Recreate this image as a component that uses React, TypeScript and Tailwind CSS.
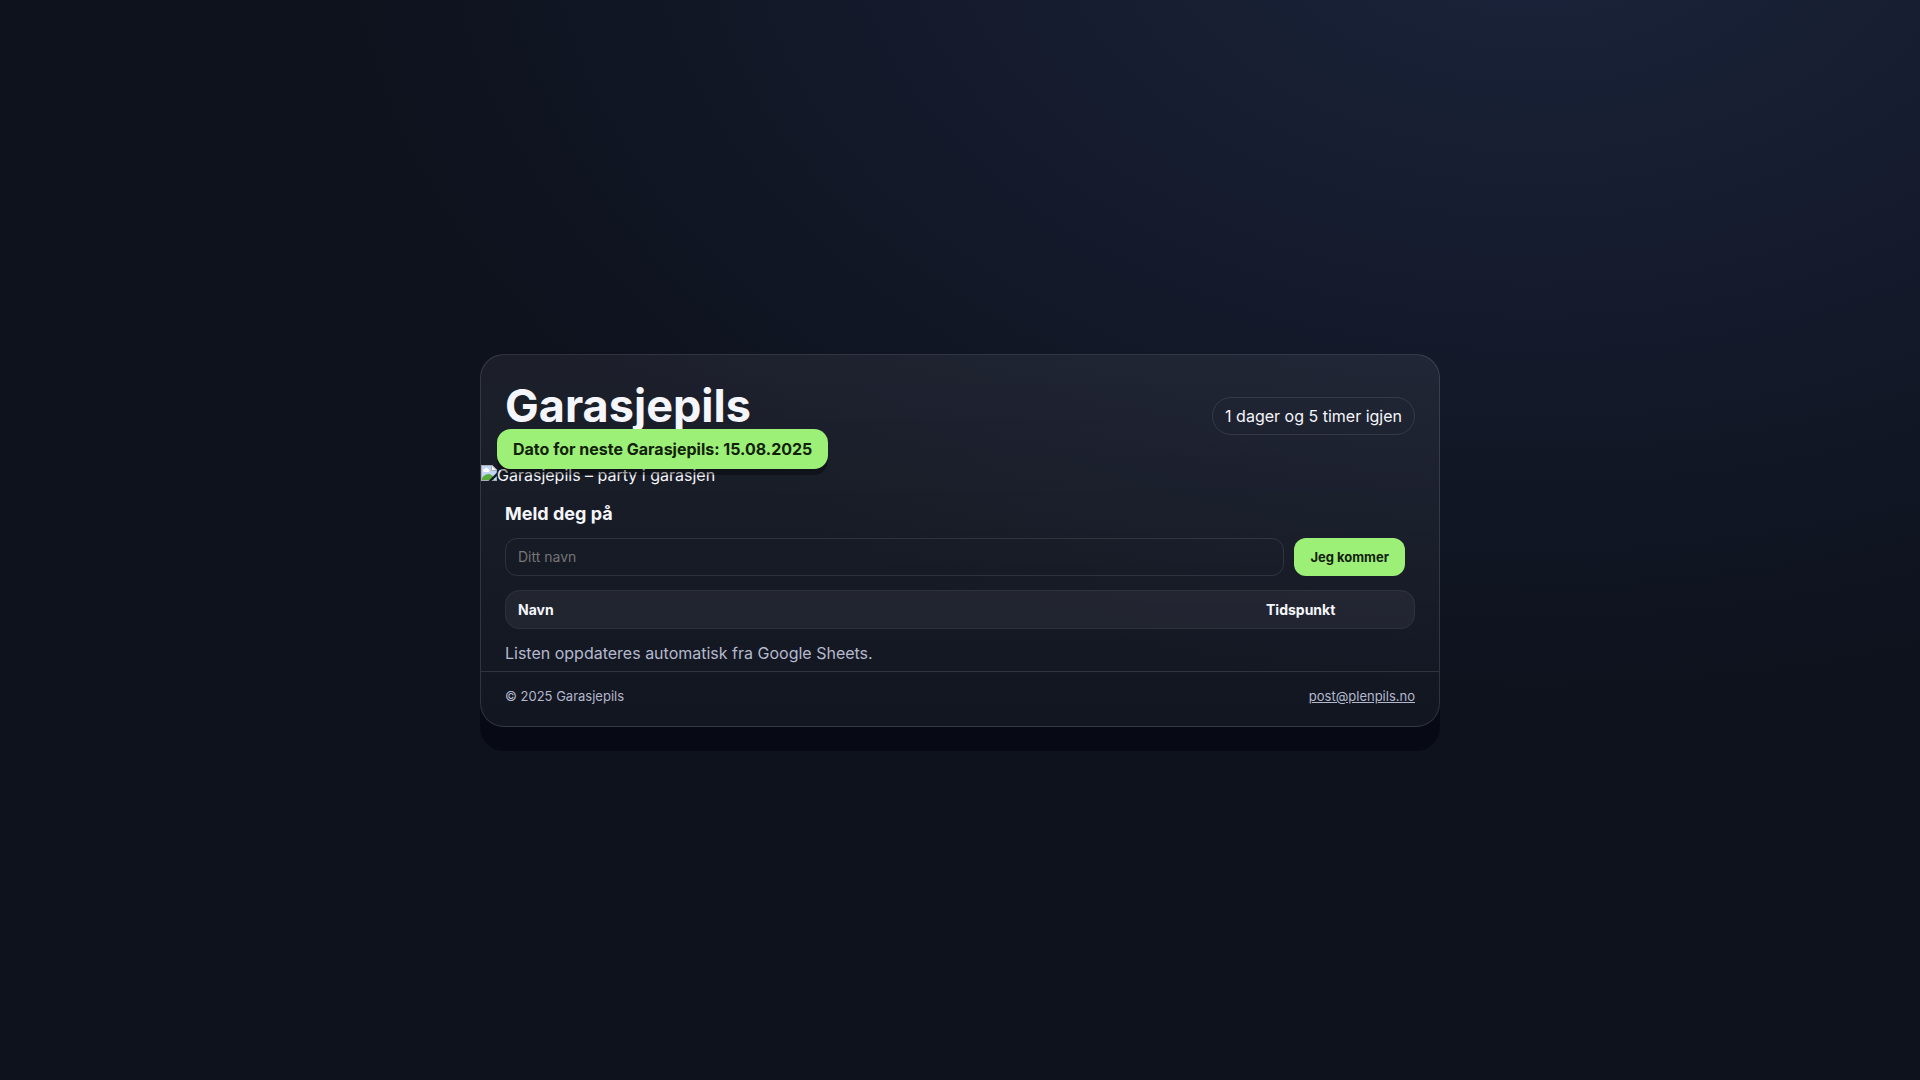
const signups: { name: string; time: string }[] = [];

function BrokenImageIcon() {
  return (
    <svg width="16" height="16" viewBox="0 0 16 16" className="shrink-0" aria-hidden="true">
      <path d="M0 0h11l5 5v11H0z" fill="#fff" />
      <path d="M1 1h9.5L15 5.5V15H1z" fill="#c3d4f5" />
      <path d="M3 7a1.5 1.5 0 0 1 .4-2.9 2 2 0 0 1 3.7 0A1.5 1.5 0 0 1 7.4 7z" fill="#fff" />
      <path d="M1 15v-2c2-2.5 4-4 6.5-4 2 0 3.5 1 4.5 2.5L13 15z" fill="#5aac3c" />
      <path d="M0 0h11v1H1v14h14v1H0z" fill="#a9adb5" />
      <path d="M15 5h1v11h-1z" fill="#a9adb5" />
      <path d="M10.5 0v5.5H16z" fill="#fff" stroke="#a9adb5" />
      <path d="M16 7.5 7.5 16h3L16 11z" fill="#171a26" />
    </svg>
  );
}

function Header() {
  return (
    <header className="flex items-center justify-between gap-4 px-6 pt-7 pb-4">
      <h1 className="mb-5 text-[45px] leading-[46px] font-bold">Garasjepils</h1>
      <div className="rounded-full border border-white/10 px-3 py-1.5">
        1 dager og 5 timer igjen
      </div>
    </header>
  );
}

function Hero() {
  return (
    <div className="relative">
      <div className="flex h-5 leading-5" role="img" aria-label="Garasjepils – party i garasjen">
        <BrokenImageIcon />
        <span>Garasjepils – party i garasjen</span>
      </div>
      <div className="absolute bottom-4 left-4 rounded-[14px] bg-[#9df077] px-4 py-2 font-bold text-[#12210b] shadow-[0_6px_0_rgba(0,0,0,0.35)]">
        Dato for neste Garasjepils: 15.08.2025
      </div>
    </div>
  );
}

function SignupForm() {
  return (
    <form className="flex gap-[10px] pr-[10px]" onSubmit={(e) => e.preventDefault()}>
      <input
        type="text"
        name="name"
        aria-label="Ditt navn"
        placeholder="Ditt navn"
        className="h-[38px] min-w-0 flex-1 rounded-xl border border-white/10 px-3 text-sm placeholder:text-[#757575]"
      />
      <button
        type="submit"
        className="h-[38px] rounded-xl bg-[#9df077] px-4 pt-0.5 text-[13px] font-bold text-[#12210b]"
      >
        Jeg kommer
      </button>
    </form>
  );
}

function SignupTable() {
  return (
    <div className="mt-3.5 overflow-hidden rounded-[14px] border border-white/10">
      <table className="w-full table-fixed text-left text-sm">
        <thead className="bg-white/5">
          <tr>
            <th className="px-3 pt-[9px] pb-2 leading-5 font-bold">Navn</th>
            <th className="w-40 px-3 pt-[9px] pb-2 leading-5 font-bold">Tidspunkt</th>
          </tr>
        </thead>
        <tbody>
          {signups.map((row) => (
            <tr key={row.name}>
              <td className="px-3 py-2">{row.name}</td>
              <td className="px-3 py-2">{row.time}</td>
            </tr>
          ))}
        </tbody>
      </table>
    </div>
  );
}

export default function App() {
  return (
    <div className="flex min-h-screen items-center justify-center bg-[#0e121d] bg-[radial-gradient(1200px_800px_at_80%_-10%,#1b243c_0%,#0e121d_100%)] font-['Inter',sans-serif] text-base text-[#f5f6fb]">
      <main className="w-full max-w-[960px] rounded-3xl border border-white/12 bg-linear-to-b from-white/6 to-white/2 shadow-[0_24px_0_rgba(0,0,10,0.45)]">
        <Header />
        <Hero />
        <section className="px-6 pt-4 pb-1.5">
          <h2 className="mb-[11px] text-lg leading-[26px] font-bold">Meld deg på</h2>
          <SignupForm />
          <SignupTable />
          <p className="mt-3 leading-6 text-[#b4b8cc]">
            Listen oppdateres automatisk fra Google Sheets.
          </p>
        </section>
        <footer className="flex items-center justify-between border-t border-white/12 px-6 pt-[15px] pb-[21px] text-[13px] leading-[18px] text-[#b4b8cc]">
          <span>© 2025 Garasjepils</span>
          <a href="mailto:post@plenpils.no" className="underline">
            post@plenpils.no
          </a>
        </footer>
      </main>
    </div>
  );
}
